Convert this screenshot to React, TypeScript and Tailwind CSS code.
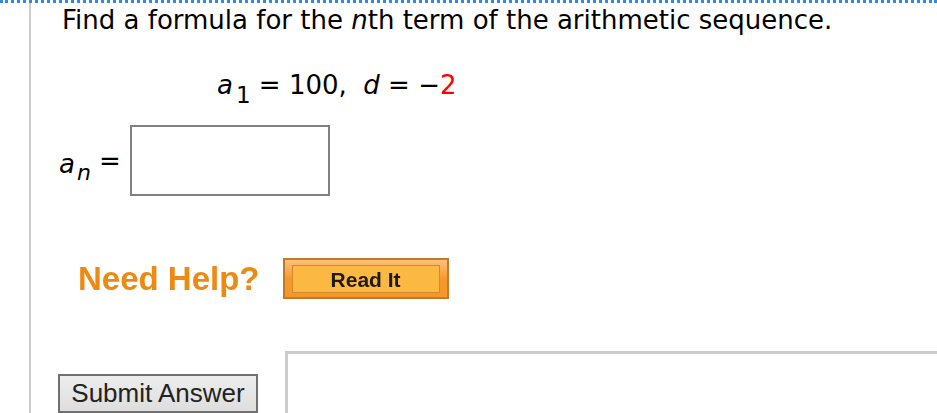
export default function App() {
  return (
    <div className="h-[413px] w-[937px] overflow-hidden bg-white">
      <div className="h-[3px] border-t-[3px] border-dotted border-[#2e8ae6]" />
      <div className="ml-[29px] flex h-[410px] flex-col border-l-2 border-[#cccccc] pl-[31px]">
        {/* question prompt */}
        <p className="mt-[2px] font-['DejaVu_Sans',Verdana,sans-serif] text-[26px] leading-[30px] text-black">
          Find a formula for the <i>n</i>th term of the arithmetic sequence.
        </p>

        <div className="mt-[35px] flex items-baseline pl-[155px] font-['DejaVu_Sans',Verdana,sans-serif] text-[26px] leading-[30px] text-black whitespace-pre">
          <i>a</i>
          <sub className="relative top-[9px] ml-[3px] align-baseline text-[23px] not-italic">1</sub>
          <span> = 100,  </span>
          <i>d</i>
          <span> = −</span>
          <span className="text-[#ff0000]">2</span>
        </div>

        {/* answer row */}
        <div className="mt-[25px] flex items-center font-['DejaVu_Sans',Verdana,sans-serif] text-[26px] text-black">
          <span className="-ml-[3px] mt-[8px] flex items-baseline">
            <i>a</i>
            <sub className="relative top-[7px] ml-[2px] align-baseline text-[22px]">
              <i>n</i>
            </sub>
          </span>
          <span className="ml-[8px] mt-[2px]">=</span>
          <input
            type="text"
            className="ml-[9px] h-[71px] w-[200px] border-2 border-[#808080] bg-white outline-none"
          />
        </div>

        {/* help */}
        <div className="mt-[58px] flex items-center">
          <span className="ml-[16px] font-['Liberation_Sans',Arial,sans-serif] text-[33px] font-bold text-[#ec8a11] blur-[0.4px]">
            Need Help?
          </span>
          <button className="ml-[23px] h-[41px] w-[166px] border-2 border-[#bf7a2c] bg-gradient-to-b from-[#fcc17a] via-[#f7982c] to-[#f7962a] px-[7px] pb-[4px] pt-[5px]">
            <span className="flex h-full w-full items-center justify-center border border-[#cf8a2e] bg-[#fbb843] font-['Liberation_Sans',Arial,sans-serif] text-[21px] font-bold text-[#1e1a10] blur-[0.4px]">
              Read It
            </span>
          </button>
        </div>

        {/* submit + response area */}
        <div className="mt-[47px] flex items-start">
          <button className="-ml-[4px] mt-[23px] h-[39px] w-[200px] border-2 border-[#707070] bg-gradient-to-b from-[#ededed] to-[#dedede] font-['Liberation_Sans',Arial,sans-serif] text-[26px] leading-none text-[#222]">
            Submit Answer
          </button>
          <div className="ml-[27px] h-[80px] flex-1 border-l-[3px] border-t-[3px] border-[#cccccc]" />
        </div>
      </div>
    </div>
  );
}
